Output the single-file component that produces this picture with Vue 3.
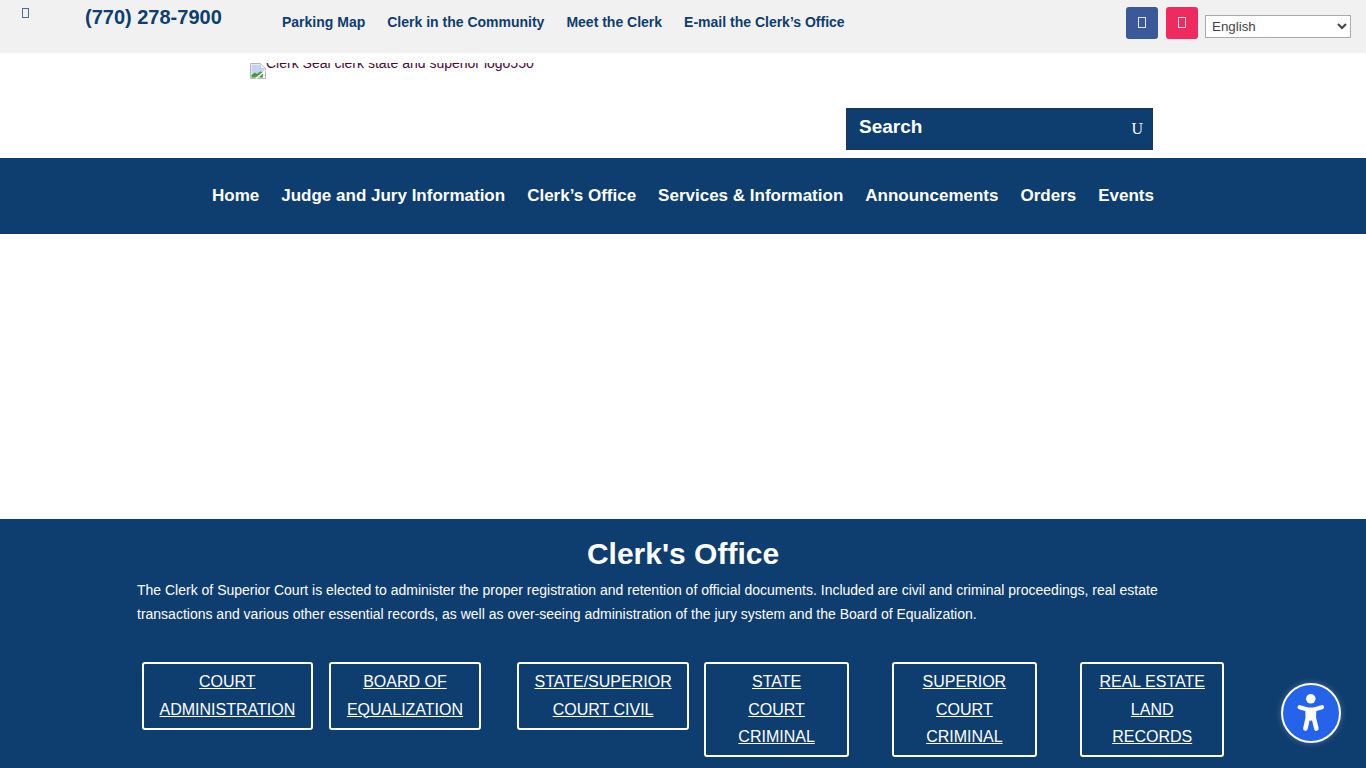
<script setup>
const links = ['Parking Map', 'Clerk in the Community', 'Meet the Clerk', 'E-mail the Clerk’s Office']
const nav = ['Home', 'Judge and Jury Information', 'Clerk’s Office', 'Services & Information', 'Announcements', 'Orders', 'Events']
const boxes = [
  ['COURT', 'ADMINISTRATION'],
  ['BOARD OF', 'EQUALIZATION'],
  ['STATE/SUPERIOR', 'COURT CIVIL'],
  ['STATE', 'COURT', 'CRIMINAL'],
  ['SUPERIOR', 'COURT', 'CRIMINAL'],
  ['REAL ESTATE', 'LAND', 'RECORDS']
]
</script>

<template>
  <div class="page">
    <div class="topbar">
      <span class="tofu tofu-phone"></span>
      <span class="phone">(770) 278-7900</span>
      <nav class="toplinks">
        <a v-for="l in links" :key="l">{{ l }}</a>
      </nav>
      <div class="social">
        <span class="soc fb"><span class="tofu tofu-white"></span></span>
        <span class="soc ig"><span class="tofu tofu-white"></span></span>
        <select class="lang"><option>English</option></select>
      </div>
    </div>

    <header class="header">
      <div class="logo">
        <svg class="broken" width="16" height="16" viewBox="0 0 16 16">
          <path d="M0.5 0.5H10.5L15.5 5.5V15.5H0.5Z" fill="#fff" stroke="#b4b8bd" />
          <path d="M1.5 1.5H10L14.5 6V8L7 14.5H1.5Z" fill="#c3d5f0" />
          <path d="M1.5 14.5V12L5 9.5L7 11L10 8.5L13 9V14.5Z" fill="#4c9a3f" />
          <path d="M10.5 0.5V5.5H15.5Z" fill="#fff" stroke="#b4b8bd" stroke-width="0.6" />
          <path d="M6 15.5L15.5 7.5" stroke="#fff" stroke-width="1.6" />
        </svg>
        <span class="alt">Clerk Seal clerk state and superior logo550</span>
      </div>
      <div class="search">
        <span class="search-label">Search</span>
        <span class="search-icon">U</span>
      </div>
    </header>

    <nav class="mainnav">
      <a v-for="n in nav" :key="n">{{ n }}</a>
    </nav>

    <div class="blank"></div>

    <section class="office">
      <h1>Clerk's Office</h1>
      <p>The Clerk of Superior Court is elected to administer the proper registration and retention of official documents. Included are civil and criminal proceedings, real estate transactions and various other essential records, as well as over-seeing administration of the jury system and the Board of Equalization.</p>
      <div class="boxes">
        <div v-for="(b, i) in boxes" :key="i" class="cell">
          <a class="box">
            <span v-for="line in b" :key="line" class="line">{{ line }}</span>
          </a>
        </div>
      </div>
    </section>

    <button class="a11y" aria-label="Accessibility">
      <svg width="38" height="38" viewBox="0 0 38 38">
        <circle cx="18.8" cy="4.8" r="4.8" fill="#fff" />
        <path d="M7.6 13.2 L15.5 15.6 H22 L30 13.2" fill="none" stroke="#fff" stroke-width="4.2" stroke-linecap="round" stroke-linejoin="round" />
        <path d="M15.6 16 L15.8 24 L13.4 34.6" fill="none" stroke="#fff" stroke-width="4.6" stroke-linecap="round" stroke-linejoin="round" />
        <path d="M22 16 L21.8 24 L24.4 34.6" fill="none" stroke="#fff" stroke-width="4.6" stroke-linecap="round" stroke-linejoin="round" />
        <path d="M14.5 14 H23 V24 L18.8 27 L14.5 24 Z" fill="#fff" />
      </svg>
    </button>
  </div>
</template>

<style>
html, body { margin: 0; background: #fff; overflow: hidden; }
</style>

<style scoped>
.page {
  height: 768px;
  overflow: hidden;
  font-family: "Liberation Sans", Arial, sans-serif;
  display: flex;
  flex-direction: column;
}
.topbar {
  flex: 0 0 53px;
  background: #f1f1f1;
  display: flex;
  align-items: flex-start;
  color: #0e3d6f;
}
.tofu { display: block; box-sizing: border-box; border: 1px solid; }
.tofu-phone {
  width: 7px;
  height: 10px;
  margin: 8px 0 0 22px;
  color: #4d6e94;
}
.phone {
  margin: 6px 0 0 56px;
  font-size: 20px;
  line-height: 23px;
  font-weight: 700;
  white-space: nowrap;
  width: 137px;
}
.toplinks {
  margin: 14px 0 0 60px;
  display: flex;
  gap: 22px;
  font-size: 14px;
  line-height: 16px;
  font-weight: 700;
  white-space: nowrap;
}
.social {
  margin: 7px 15px 0 auto;
  display: flex;
  align-items: flex-start;
  gap: 8px;
}
.soc {
  width: 32px;
  height: 32px;
  border-radius: 3px;
  display: flex;
  align-items: center;
  justify-content: center;
}
.fb { background: #3b5998; }
.ig { background: #ee2a5e; margin-right: -1px; }
.tofu-white { width: 8px; height: 11px; color: #fff; margin-top: -1px; opacity: .85; }
.lang {
  width: 146px;
  height: 23px;
  margin-top: 8px;
  font-family: "Liberation Sans", Arial, sans-serif;
  font-size: 13.33px;
  color: #444;
  background: #fff;
  border: 1px solid #aaa;
  padding: 0 0 0 2px;
}
.header {
  flex: 0 0 105px;
  background: #fff;
  position: relative;
  display: flex;
  flex-direction: column;
}
.logo {
  margin: 10px 0 0 250px;
  height: 16px;
  display: flex;
  overflow: hidden;
  align-items: flex-start;
  white-space: nowrap;
}
.broken { flex: none; }
.alt {
  font-size: 14px;
  line-height: 16px;
  margin-top: -8px;
  color: #4b0a3a;
}
.search {
  box-sizing: border-box;
  width: 307px;
  height: 42px;
  margin: 29px 0 0 846px;
  background: #0e3d6f;
  border: 1px solid #26364a;
  color: #fff;
  display: flex;
  align-items: center;
  justify-content: space-between;
  padding: 0 9px 0 12px;
}
.search-label { font-size: 19px; font-weight: 700; line-height: 36px; margin-top: -4px; }
.search-icon { font-family: "Liberation Serif", serif; font-size: 16px; line-height: 16px; margin-top: -1px; }
.mainnav {
  flex: 0 0 76px;
  background: #0e3d6f;
  display: flex;
  justify-content: center;
  align-items: flex-start;
  gap: 22px;
  padding-top: 28px;
  box-sizing: border-box;
  color: #fff;
  font-size: 17px;
  line-height: 20px;
  font-weight: 700;
  white-space: nowrap;
}
.blank { flex: 0 0 285px; background: #fff; }
.office {
  flex: 1;
  background: #0e3d6f;
  color: #fff;
  padding: 0 137px;
  min-height: 0;
}
h1 {
  margin: 17px 0 0;
  font-size: 30px;
  line-height: 36px;
  font-weight: 700;
  text-align: center;
}
p {
  margin: 6px 0 0;
  width: 1040px;
  font-size: 14px;
  line-height: 24px;
}
.boxes {
  margin-top: 36px;
  width: 1125px;
  display: grid;
  grid-template-columns: 187.4px 187.6px 187.4px 187.8px 187.8px 1fr;
  align-items: start;
}
.cell { padding-left: 5px; }
.box {
  display: inline-flex;
  flex-direction: column;
  align-items: center;
  box-sizing: border-box;
  min-width: 144.4px;
  border: 2px solid #fff;
  border-radius: 3px;
  padding: 4px 15.5px 4.7px;
  font-size: 16px;
  line-height: 27.5px;
  white-space: nowrap;
}
.line { text-decoration: underline; }
.a11y {
  position: absolute;
  left: 1281px;
  top: 683px;
  width: 60px;
  height: 60px;
  box-sizing: border-box;
  border-radius: 50%;
  background: #2563eb;
  border: 2.5px solid #fff;
  padding: 0;
  display: flex;
  align-items: center;
  justify-content: center;
  box-shadow: 0 0 6px rgba(255,255,255,.25);
}
</style>
